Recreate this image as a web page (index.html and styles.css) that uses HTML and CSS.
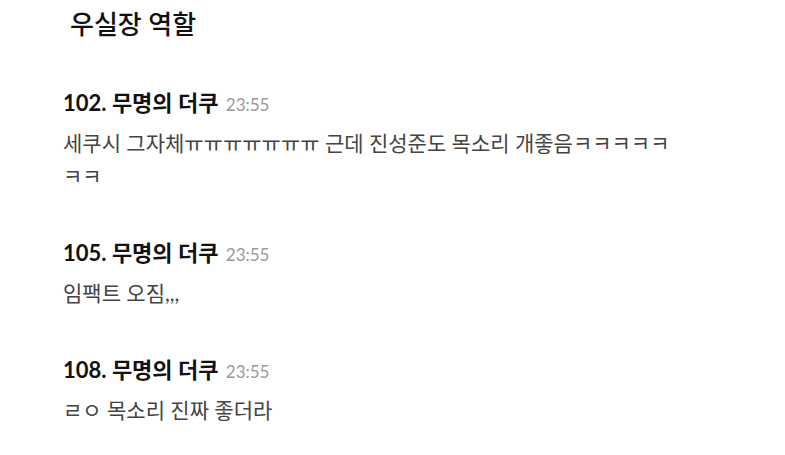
FILE: index.html
```html
<!DOCTYPE html>
<html>
<head>
    <title>우실장 역할</title>
    <link rel="stylesheet" href="styles.css">
</head>
<body>

<div class="thread">
    <h2 class="thread-title">우실장 역할</h2>

    <div class="comment">
        <div class="comment-head">
            <span class="comment-no">102.</span>
            <span class="comment-name">무명의 더쿠</span>
            <span class="comment-time">23:55</span>
        </div>
        <p class="comment-text">세쿠시 그자체ㅠㅠㅠㅠㅠㅠㅠ 근데 진성준도 목소리 개좋음ㅋㅋㅋㅋㅋㅋㅋ</p>
    </div>

    <div class="comment">
        <div class="comment-head">
            <span class="comment-no">105.</span>
            <span class="comment-name">무명의 더쿠</span>
            <span class="comment-time">23:55</span>
        </div>
        <p class="comment-text">임팩트 오짐,,,</p>
    </div>

    <div class="comment">
        <div class="comment-head">
            <span class="comment-no">108.</span>
            <span class="comment-name">무명의 더쿠</span>
            <span class="comment-time">23:55</span>
        </div>
        <p class="comment-text">ㄹㅇ 목소리 진짜 좋더라</p>
    </div>
</div>

</body>
</html>
```

FILE: styles.css
```css
body {
    margin: 0;
    background: #fff;
    font-family: Lato, "Noto Sans CJK KR", sans-serif;
    color: #222;
}

.thread {
    width: 618px;
    padding: 6px 0 0 63px;
}

.thread-title {
    margin: 0 0 48px 7px;
    font-size: 26px;
    font-weight: 500;
    line-height: 36px;
    color: #111;
}

.comment {
    margin-bottom: 48px;
}

.comment:last-child {
    margin-bottom: 0;
}

.comment-head {
    font-size: 22px;
    line-height: 26px;
    font-weight: bold;
    color: #111;
}

.comment-time {
    margin-left: 2px;
    font-size: 17px;
    font-weight: normal;
    color: #999;
}

.comment-text {
    margin: 8px 0 0;
    font-size: 21px;
    line-height: 33px;
    color: #444;
}
```
